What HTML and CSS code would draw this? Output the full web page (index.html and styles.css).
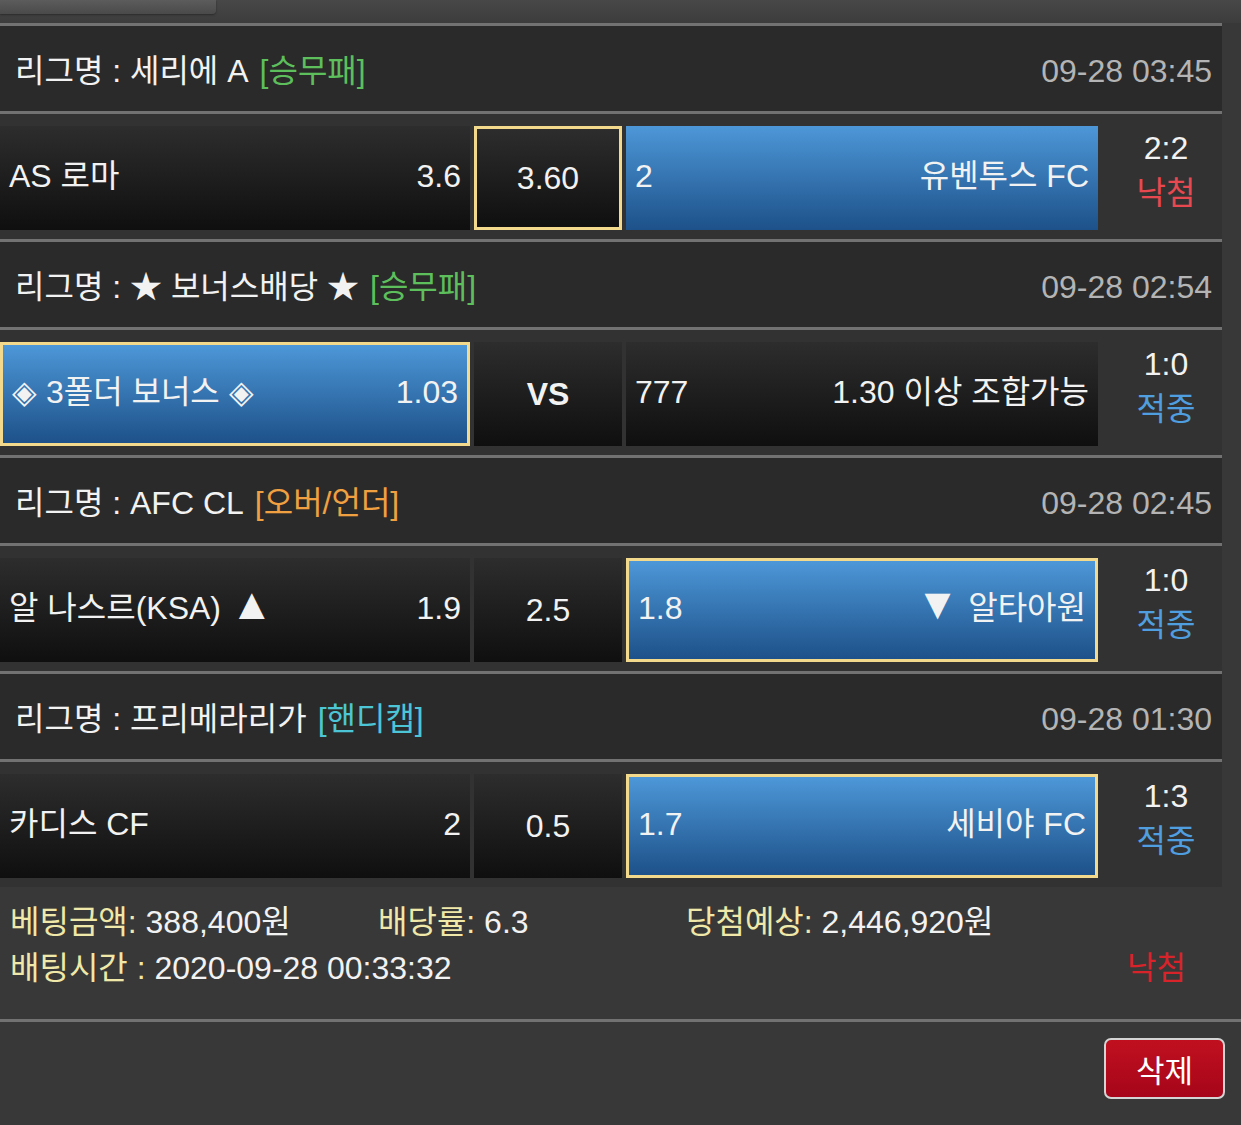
FILE: index.html
```html
<!DOCTYPE html>
<html>

<head>
	<title>배팅내역</title>
	<link rel="stylesheet" href="styles.css">
</head>

<body>
	<div class="topbar">
		<div class="tab"></div>
	</div>

	<div class="list">
		<div class="league">
			<div>리그명 : 세리에 A<span class="type green">[승무패]</span></div>
			<div class="time">09-28 03:45</div>
		</div>
		<div class="match">
			<div class="cell"><span>AS 로마</span><span>3.6</span></div>
			<div class="cell mid sel">3.60</div>
			<div class="cell pick"><span>2</span><span>유벤투스 FC</span></div>
			<div class="result"><span>2:2</span><span class="lose">낙첨</span></div>
		</div>

		<div class="league">
			<div>리그명 : ★ 보너스배당 ★<span class="type green">[승무패]</span></div>
			<div class="time">09-28 02:54</div>
		</div>
		<div class="match">
			<div class="cell pick sel"><span>◈ 3폴더 보너스 ◈</span><span>1.03</span></div>
			<div class="cell mid vs">VS</div>
			<div class="cell"><span>777</span><span>1.30 이상 조합가능</span></div>
			<div class="result"><span>1:0</span><span class="win">적중</span></div>
		</div>

		<div class="league">
			<div>리그명 : AFC CL<span class="type orange">[오버/언더]</span></div>
			<div class="time">09-28 02:45</div>
		</div>
		<div class="match">
			<div class="cell"><span>알 나스르(KSA) <i class="arrow">▲</i></span><span>1.9</span></div>
			<div class="cell mid">2.5</div>
			<div class="cell pick sel"><span>1.8</span><span><i class="arrow">▼</i> 알타아원</span></div>
			<div class="result"><span>1:0</span><span class="win">적중</span></div>
		</div>

		<div class="league">
			<div>리그명 : 프리메라리가<span class="type cyan">[핸디캡]</span></div>
			<div class="time">09-28 01:30</div>
		</div>
		<div class="match">
			<div class="cell"><span>카디스 CF</span><span>2</span></div>
			<div class="cell mid">0.5</div>
			<div class="cell pick sel"><span>1.7</span><span>세비야 FC</span></div>
			<div class="result"><span>1:3</span><span class="win">적중</span></div>
		</div>
	</div>

	<div class="summary">
		<div class="sum-row">
			<span class="amount"><em>베팅금액:</em> 388,400원</span>
			<span class="rate"><em>배당률:</em> 6.3</span>
			<span><em>당첨예상:</em> 2,446,920원</span>
		</div>
		<div class="sum-row split">
			<span><em>배팅시간 :</em> 2020-09-28 00:33:32</span>
			<span class="lost">낙첨</span>
		</div>
	</div>

	<div class="actions">
		<button class="del">삭제</button>
	</div>
</body>

</html>
```

FILE: styles.css
```css
* {
	margin: 0px;
	padding: 0px;
	box-sizing: border-box;
}

body {
	width: 1241px;
	height: 1125px;
	overflow: hidden;
	background: #383838;
	color: #f2f2f2;
	font-family: "Liberation Sans", "Noto Sans CJK KR", sans-serif;
	font-size: 32px;
	line-height: 1.15;
}

.topbar {
	height: 23px;
	background: linear-gradient(#484848, #3c3c3c);
}

.tab {
	width: 216px;
	height: 14px;
	background: linear-gradient(#5c5c5c, #4a4a4a);
	border-radius: 0 0 4px 0;
	box-shadow: 0 1px 2px #2a2a2a;
}

.list {
	width: 1222px;
}

.league {
	display: flex;
	justify-content: space-between;
	align-items: center;
	height: 88px;
	padding: 6px 10px 0 15px;
	border-top: 3px solid #727272;
	background: #2a2a2a;
}

.type {
	margin-left: 11px;
}

.green {
	color: #5cbf5c;
}

.orange {
	color: #f0a040;
}

.cyan {
	color: #4cc6d6;
}

.time {
	color: #b4b4b4;
}

.match {
	display: grid;
	grid-template-columns: 470px 148px 472px 1fr;
	column-gap: 4px;
	padding: 12px 0 9px;
	border-top: 3px solid #727272;
	background: #323232;
}

.cell {
	height: 104px;
	display: flex;
	align-items: center;
	justify-content: space-between;
	padding: 0 9px 4px;
	background: linear-gradient(#2d2d2d, #0f0f0f);
}

.cell.pick {
	background: linear-gradient(#4d97d8, #1d5189);
}

.cell.sel {
	border: 3px solid #f3d98c;
}

.mid {
	justify-content: center;
	padding-bottom: 0;
}

.vs {
	font-weight: bold;
}

.arrow {
	font-style: normal;
	font-size: 44px;
	line-height: 0;
}

.result {
	display: flex;
	flex-direction: column;
	align-items: center;
	justify-content: center;
	padding: 0 0 14px 8px;
	line-height: 45px;
}

.lose {
	color: #e8484f;
}

.win {
	color: #4f9fe0;
}

.summary {
	padding: 12px 0 28px 10px;
	line-height: 46px;
	border-bottom: 3px solid #727272;
}

.sum-row {
	display: flex;
}

.sum-row em {
	font-style: normal;
	color: #f0e8a8;
}

.amount {
	width: 368px;
}

.rate {
	width: 308px;
}

.split {
	justify-content: space-between;
	padding-right: 55px;
}

.lost {
	color: #d9232b;
}

.actions {
	display: flex;
	justify-content: flex-end;
	padding: 16px 16px 0 0;
}

.del {
	width: 121px;
	height: 61px;
	border: 2px solid #d4d4d4;
	border-radius: 7px;
	background: linear-gradient(#c0101f, #a6051a);
	color: #ffffff;
	font-family: inherit;
	font-size: 31px;
}
```
